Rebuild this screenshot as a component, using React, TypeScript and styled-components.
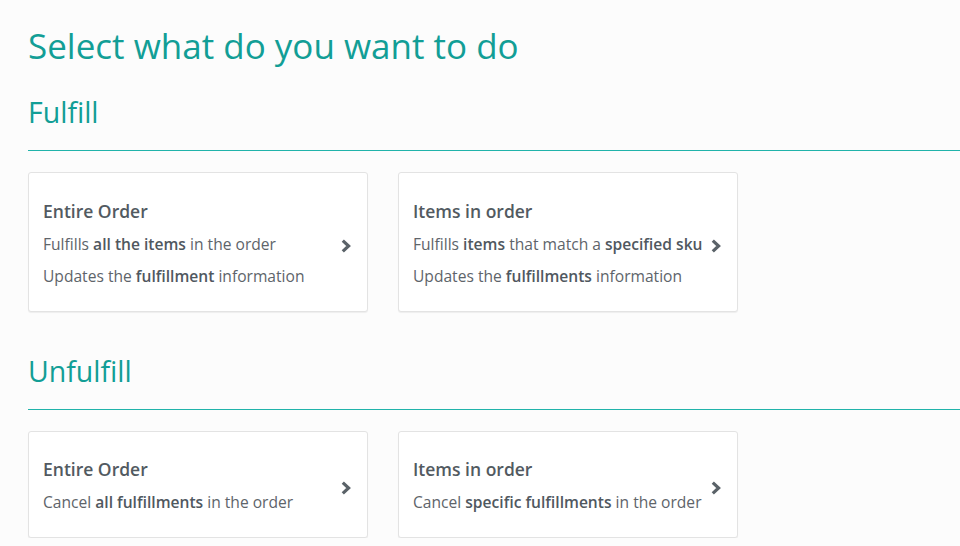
import styled, { createGlobalStyle } from "styled-components";

const GlobalStyle = createGlobalStyle`
  html, body {
    margin: 0;
    padding: 0;
    background: #fcfcfc;
  }
  body {
    font-family: "Open Sans", "Liberation Sans", sans-serif;
    -webkit-font-smoothing: antialiased;
  }
`;

const Page = styled.div`
  padding: 20px 0 0 28px;
  overflow: hidden;
`;

const Title = styled.h1`
  margin: 0;
  font-size: 35px;
  font-weight: 400;
  line-height: 52px;
  color: #129e96;
`;

const SectionTitle = styled.h2`
  margin: 0;
  font-size: 28.5px;
  font-weight: 400;
  line-height: 44px;
  color: #129e96;
`;

const Section = styled.section<{ $gap: number }>`
  margin-top: ${(p) => p.$gap}px;
`;

const Divider = styled.hr`
  margin: 16px 0 21px;
  border: 0;
  height: 1px;
  background: #21b3aa;
`;

const Cards = styled.div`
  display: flex;
  gap: 30px;
`;

const Card = styled.button`
  display: flex;
  align-items: center;
  width: 340px;
  box-sizing: border-box;
  padding: 21.5px 16px 19px 14px;
  background: #fff;
  border: 1px solid #e3e3e3;
  border-radius: 3px;
  box-shadow: 0 1px 1px rgba(0, 0, 0, 0.06);
  text-align: left;
  font-family: inherit;
  cursor: pointer;
`;

const Body = styled.div`
  flex: 1;
  min-width: 0;
`;

const CardTitle = styled.div`
  font-size: 17.5px;
  font-weight: 600;
  line-height: 33px;
  color: #525a61;
`;

const Line = styled.div`
  font-size: 15.6px;
  line-height: 32px;
  color: #5e646a;
  white-space: nowrap;
  b {
    font-weight: 600;
    color: #50585f;
  }
`;

const Chevron = styled.svg`
  flex: none;
  width: 10px;
  height: 14px;
  margin: 5px 0 0 6px;
  color: #5a6268;
`;

type Option = { title: string; lines: React.ReactNode[] };

const fulfill: Option[] = [
  {
    title: "Entire Order",
    lines: [
      <>Fulfills <b>all the items</b> in the order</>,
      <>Updates the <b>fulfillment</b> information</>,
    ],
  },
  {
    title: "Items in order",
    lines: [
      <>Fulfills <b>items</b> that match a <b>specified sku</b></>,
      <>Updates the <b>fulfillments</b> information</>,
    ],
  },
];

const unfulfill: Option[] = [
  {
    title: "Entire Order",
    lines: [<>Cancel <b>all fulfillments</b> in the order</>],
  },
  {
    title: "Items in order",
    lines: [<>Cancel <b>specific fulfillments</b> in the order</>],
  },
];

function OptionCard({ title, lines }: Option) {
  return (
    <Card>
      <Body>
        <CardTitle>{title}</CardTitle>
        {lines.map((l, i) => (
          <Line key={i}>{l}</Line>
        ))}
      </Body>
      <Chevron viewBox="0 0 10 14">
        <path
          d="M1.8 1.6 L7.6 7 L1.8 12.4"
          fill="none"
          stroke="currentColor"
          strokeWidth="3.2"
        />
      </Chevron>
    </Card>
  );
}

export default function App() {
  return (
    <>
      <GlobalStyle />
      <Page>
        <Title>Select what do you want to do</Title>
        <Section $gap={18}>
          <SectionTitle>Fulfill</SectionTitle>
          <Divider />
          <Cards>
            {fulfill.map((o, i) => (
              <OptionCard key={i} {...o} />
            ))}
          </Cards>
        </Section>
        <Section $gap={37}>
          <SectionTitle>Unfulfill</SectionTitle>
          <Divider />
          <Cards>
            {unfulfill.map((o, i) => (
              <OptionCard key={i} {...o} />
            ))}
          </Cards>
        </Section>
      </Page>
    </>
  );
}
